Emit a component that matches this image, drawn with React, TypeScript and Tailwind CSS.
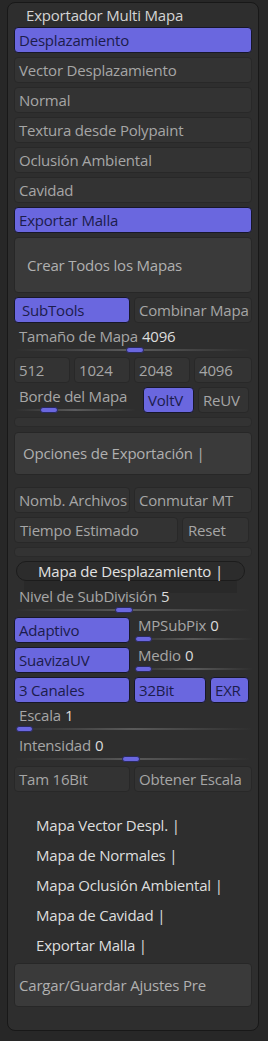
import React from "react";

const font = { fontFamily: '"Open Sans", "Noto Sans", sans-serif' };

function Btn({ label, active = false, className = "" }: { label: string; active?: boolean; className?: string }) {
  return (
    <div
      className={
        "h-[26px] flex items-center pl-[4px] rounded-[4px] border text-[15px] tracking-[-0.2px] whitespace-nowrap overflow-hidden " +
        (active
          ? "bg-[#6a67df] border-[#17172a] text-[#1c1c4c]"
          : "bg-[#333333] border-[#282828] text-[#a6a6a6]") +
        " " +
        className
      }
    >
      {label}
    </div>
  );
}

function Slider({ knobLeft, knobWidth = 18, className = "" }: { knobLeft: number; knobWidth?: number; className?: string }) {
  return (
    <div className={"relative h-[8px] " + className}>
      <div className="absolute left-0 right-0 top-[3px] h-[2px] bg-gradient-to-r from-[#2f2f2f] via-[#5a5a5a] to-[#2f2f2f]" />
      <div
        className="absolute top-[1px] h-[6px] rounded-[3px] bg-[#6a67df] border border-[#2a2a60]"
        style={{ left: knobLeft, width: knobWidth }}
      />
    </div>
  );
}

function Label({ name, value, className = "" }: { name: string; value?: string; className?: string }) {
  return (
    <div className={"flex items-end text-[15px] tracking-[-0.2px] leading-[20px] text-[#a6a6a6] whitespace-nowrap " + className}>
      <span>{name}</span>
      {value !== undefined && <span className="ml-[4px] text-[#dcdcdc]">{value}</span>}
    </div>
  );
}

function BigBtn({ label, h, pl }: { label: string; h: string; pl: string }) {
  return (
    <div className={"flex items-center rounded-[4px] border border-[#272727] bg-[#3a3a3a] text-[15px] tracking-[-0.2px] whitespace-nowrap text-[#b0b0b0] " + h + " " + pl}>
      {label}
    </div>
  );
}

function Bar({ className = "" }: { className?: string }) {
  return <div className={"h-[10px] rounded-[4px] border border-[#2a2a2a] bg-[#333333] " + className} />;
}

function SectionText({ label }: { label: string }) {
  return (
    <div className="h-[30px] flex items-center pl-[22px] text-[15px] tracking-[-0.2px] text-[#dedede] whitespace-nowrap">{label}</div>
  );
}

export default function App() {
  return (
    <div className="w-[268px] h-[1041px] bg-[#272727] pt-[2px] pl-[7px]" style={font}>
      <div className="w-[252px] h-[1029px] rounded-[8px] border border-[#181818] bg-[#2e2e2e] px-[6px] flex flex-col">
        <div className="h-[24px] flex items-center pl-[12px] text-[15px] tracking-[-0.2px] text-[#d4d4d4]">Exportador Multi Mapa</div>
        <div className="flex flex-col gap-[4px]">
          <Btn label="Desplazamiento" active />
          <Btn label="Vector Desplazamiento" />
          <Btn label="Normal" />
          <Btn label="Textura desde Polypaint" />
          <Btn label="Oclusión Ambiental" />
          <Btn label="Cavidad" />
          <Btn label="Exportar Malla" active />
          <BigBtn label="Crear Todos los Mapas" h="h-[56px]" pl="pl-[12px]" />
          <div className="flex gap-[4px]">
            <Btn label="SubTools" active className="w-[116px] pl-[7px]" />
            <Btn label="Combinar Mapa" className="flex-1 pl-[4px]" />
          </div>
        </div>
        <Label name="Tamaño de Mapa" value="4096" className="h-[23px] pl-[5px]" />
        <Slider knobLeft={109} className="mx-[3px]" />
        <div className="flex gap-[4px] mt-[3px]">
          <Btn label="512" className="w-[56px]" />
          <Btn label="1024" className="w-[56px]" />
          <Btn label="2048" className="w-[56px]" />
          <Btn label="4096" className="flex-1" />
        </div>
        <div className="flex mt-[4px] h-[26px]">
          <div className="w-[123px] flex flex-col">
            <Label name="Borde del Mapa" className="h-[19px] pl-[5px]" />
            <Slider knobLeft={24} className="mx-[2px]" />
          </div>
          <Btn label="VoltV" active className="ml-[6px] w-[51px] pl-[4px]" />
          <Btn label="ReUV" className="ml-[4px] w-[51px] pl-[4px]" />
        </div>
        <Bar className="mt-[4px]" />
        <div className="mt-[5px]">
          <BigBtn label="Opciones de Exportación |" h="h-[43px]" pl="pl-[8px]" />
        </div>
        <div className="flex gap-[4px] mt-[12px]">
          <Btn label="Nomb. Archivos" className="w-[116px] pl-[4px]" />
          <Btn label="Conmutar MT" className="flex-1 pl-[4px]" />
        </div>
        <div className="flex gap-[4px] mt-[4px]">
          <Btn label="Tiempo Estimado" className="w-[164px] pl-[5px]" />
          <Btn label="Reset" className="w-[67px] pl-[5px]" />
        </div>
        <Bar className="mt-[4px]" />
        <div className="mt-[4px] ml-[2px] w-[229px] h-[20px] rounded-full border border-[#1c1c1c] bg-[#2c2c2c] flex items-center justify-center text-[15px] tracking-[-0.2px] whitespace-nowrap text-[#e2e2e2]">
          Mapa de Desplazamiento |
        </div>
        <div className="relative">
          <div className="absolute left-[10px] w-[213px] top-0 h-[12px] bg-[#292929]" />
          <Label name="Nivel de SubDivisión" value="5" className="relative h-[25px] pl-[5px]" />
        </div>
        <Slider knobLeft={98} className="mx-[3px]" />
        <div className="flex gap-[4px] mt-[3px]">
          <Btn label="Adaptivo" active className="w-[116px]" />
          <div className="flex-1 flex flex-col">
            <Label name="MPSubPix" value="0" className="h-[18px] pl-[4px]" />
            <Slider knobLeft={1} knobWidth={17} />
          </div>
        </div>
        <div className="flex gap-[4px] mt-[4px]">
          <Btn label="SuavizaUV" active className="w-[116px]" />
          <div className="flex-1 flex flex-col">
            <Label name="Medio" value="0" className="h-[18px] pl-[4px]" />
            <Slider knobLeft={1} knobWidth={17} />
          </div>
        </div>
        <div className="flex gap-[4px] mt-[4px]">
          <Btn label="3 Canales" active className="w-[116px]" />
          <Btn label="32Bit" active className="w-[72px] pl-[4px]" />
          <Btn label="EXR" active className="w-[39px] pl-[4px]" />
        </div>
        <Label name="Escala" value="1" className="h-[22px] pl-[5px]" />
        <Slider knobLeft={1} knobWidth={17} className="mx-[1px]" />
        <Label name="Intensidad" value="0" className="h-[22px] pl-[5px]" />
        <Slider knobLeft={105} className="mx-[3px]" />
        <div className="flex gap-[4px] mt-[3px]">
          <Btn label="Tam 16Bit" className="w-[116px]" />
          <Btn label="Obtener Escala" className="flex-1 pl-[4px]" />
        </div>
        <div className="mt-[18px] flex flex-col">
          <SectionText label="Mapa Vector Despl. |" />
          <SectionText label="Mapa de Normales |" />
          <SectionText label="Mapa Oclusión Ambiental |" />
          <SectionText label="Mapa de Cavidad |" />
          <SectionText label="Exportar Malla |" />
        </div>
        <div className="mt-[3px]">
          <BigBtn label="Cargar/Guardar Ajustes Pre" h="h-[44px]" pl="pl-[4px]" />
        </div>
      </div>
    </div>
  );
}
